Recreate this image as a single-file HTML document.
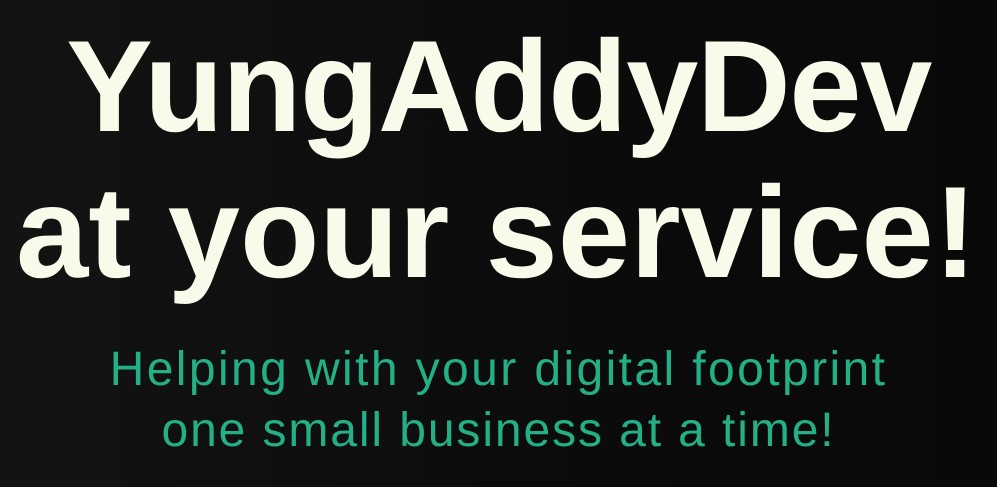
<!DOCTYPE html>
<html><head><meta charset="utf-8"><style>
html,body{margin:0;padding:0}
body{width:997px;height:487px;overflow:hidden;position:relative;background:linear-gradient(90deg,#131313,#0b0b0b 60%,#090909);font-family:"Liberation Sans",sans-serif}
.l{position:absolute;left:0;width:997px;text-align:center;white-space:nowrap}
.h{font-weight:bold;font-size:130px;line-height:130px;color:#f8fbea}
.s{font-size:48px;line-height:48px;color:#23b086;letter-spacing:2.4px}
</style></head><body>
<div class="l h" style="top:21px;letter-spacing:-1.5px">YungAddyDev</div>
<div class="l h" style="top:167px;left:-2px">at your service!</div>
<div class="l s" style="top:346px">Helping with your digital footprint</div>
<div class="l s" style="top:407px;letter-spacing:1.9px">one small business at a time!</div>
</body></html>
